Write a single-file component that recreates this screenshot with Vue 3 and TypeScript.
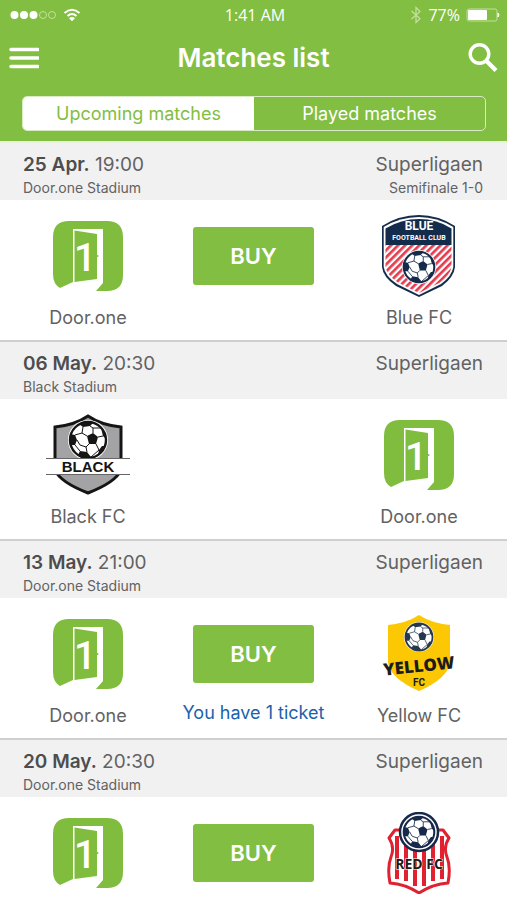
<script setup lang="ts">
import { ref } from 'vue'

type Crest = 'door' | 'blue' | 'black' | 'yellow' | 'red'

interface Team {
  name: string
  crest: Crest
}

interface Match {
  id: number
  date: string
  time: string
  stadium: string
  league: string
  stage?: string
  home: Team
  away: Team
  onSale: boolean
  note?: string
}

const door: Team = { name: 'Door.one', crest: 'door' }

const tab = ref<'upcoming' | 'played'>('upcoming')

const matches: Match[] = [
  { id: 1, date: '25 Apr.', time: '19:00', stadium: 'Door.one Stadium', league: 'Superligaen', stage: 'Semifinale 1-0', home: door, away: { name: 'Blue FC', crest: 'blue' }, onSale: true },
  { id: 2, date: '06 May.', time: '20:30', stadium: 'Black Stadium', league: 'Superligaen', home: { name: 'Black FC', crest: 'black' }, away: door, onSale: false },
  { id: 3, date: '13 May.', time: '21:00', stadium: 'Door.one Stadium', league: 'Superligaen', home: door, away: { name: 'Yellow FC', crest: 'yellow' }, onSale: true, note: 'You have 1 ticket' },
  { id: 4, date: '20 May.', time: '20:30', stadium: 'Door.one Stadium', league: 'Superligaen', home: door, away: { name: 'Red FC', crest: 'red' }, onSale: true },
]
</script>

<template>
  <div class="app">
    <svg class="defs" aria-hidden="true">
      <symbol id="ball" viewBox="-20 -20 40 40">
        <circle r="18" fill="#fff" stroke="currentColor" stroke-width="2.4" />
        <path fill="currentColor" d="M-1-4 5-7 10-3 8 4 1 4Z" />
        <path fill="currentColor" d="M-9-16Q-2-19 5-17L2-14-5-13ZM13-12Q18-7 18-1L15-4ZM17 6Q15 12 10 15L11 10 14 6ZM-8 11-1 12 3 17Q-5 19-10 15ZM-18-6-13-5-11 0-13 5-17 5Q-19 0-18-6Z" />
        <path fill="none" stroke="currentColor" stroke-width="1" d="M-1-4-6-7-5-13M5-7 5-12 2-14M5-12 13-12M10-3 15-4M8 4 11 10M1 4-2 7-1 12M-2 7-8 5-11 0M-13-5-6-7M-13 5-8 11M3 17 11 10" />
      </symbol>
    </svg>

    <header class="top">
      <div class="status">
        <div class="status-left">
          <svg width="47" height="10" viewBox="0 0 47 10" aria-hidden="true">
            <g fill="#fff"><circle cx="4.500" cy="5" r="4" /><circle cx="14" cy="5" r="4" /><circle cx="23.500" cy="5" r="4" /></g>
            <g fill="none" stroke="#c4e09f" stroke-width="1"><circle cx="33" cy="5" r="3.500" /><circle cx="42" cy="5" r="3.500" /></g>
          </svg>
          <svg width="18" height="14" viewBox="0 0 18 14" aria-hidden="true">
            <g fill="none" stroke="#fff" stroke-width="2"><path d="M1.500 5Q9-1.500 16.500 5" /><path d="M4.500 8Q9 4 13.500 8" /></g>
            <path fill="#fff" d="M6 10.300Q9 7.800 12 10.300L9 13.300Z" />
          </svg>
        </div>
        <span>1:41 AM</span>
        <div class="status-right">
          <svg width="12" height="18" viewBox="0 0 12 18" aria-hidden="true">
            <path d="M1.500 5 10 12.500 6 16.500V1.500L10 5.500 1.500 13" fill="none" stroke="#c4e09f" stroke-width="1.200" />
          </svg>
          <span>77%</span>
          <svg width="34" height="14" viewBox="0 0 34 14" aria-hidden="true">
            <rect x="1" y="1" width="30" height="12" rx="2" fill="none" stroke="#c4e09f" />
            <rect x="2" y="2" width="19" height="10" rx="1" fill="#fff" />
            <path d="M32 5Q34 7 32 9Z" fill="#fff" stroke="#fff" />
          </svg>
        </div>
      </div>

      <div class="bar">
        <button class="icon" type="button" aria-label="Menu">
          <svg width="30" height="22" viewBox="0 0 30 22"><path d="M2 2.500H29M2 11H29M2 19.500H29" stroke="#fff" stroke-width="3.500" stroke-linecap="round" /></svg>
        </button>
        <h1>Matches list</h1>
        <button class="icon" type="button" aria-label="Search">
          <svg width="30" height="30" viewBox="0 0 30 30"><g fill="none" stroke="#fff"><circle cx="11.500" cy="11" r="9.300" stroke-width="3.400" /><path d="M18 17.500 28 27.500" stroke-width="4.200" /></g></svg>
        </button>
      </div>

      <div class="tabs" role="tablist">
        <button type="button" role="tab" :aria-selected="tab === 'upcoming'" :class="{ active: tab === 'upcoming' }" @click="tab = 'upcoming'">Upcoming matches</button>
        <button type="button" role="tab" :aria-selected="tab === 'played'" :class="{ active: tab === 'played' }" @click="tab = 'played'">Played matches</button>
      </div>
    </header>

    <main>
      <article v-for="m in matches" :key="m.id" class="match">
        <div class="head">
          <div class="line">
            <span><strong>{{ m.date }}</strong> {{ m.time }}</span>
            <span>{{ m.league }}</span>
          </div>
          <div class="line small">
            <span>{{ m.stadium }}</span>
            <span>{{ m.stage }}</span>
          </div>
        </div>

        <div class="body">
          <div v-for="(team, side) in { home: m.home, away: m.away }" :key="side" class="team" :class="side">
            <svg v-if="team.crest === 'door'" class="crest" viewBox="0 0 84 82" aria-hidden="true">
              <path fill="#80bd3f" d="M23 6H61Q77 6 77 22V60Q77 76 61 76H50L57 68V14H27V67L14 73Q7 69 7 59V22Q7 6 23 6Z" />
              <path fill="#80bd3f" d="M28.500 15.500 51 19V64L28.500 67Z" />
              <circle cx="51.500" cy="41" r="1" fill="#80bd3f" />
              <text x="39" y="56" class="door-number">1</text>
            </svg>

            <svg v-else-if="team.crest === 'blue'" class="crest" viewBox="0 0 84 82" aria-hidden="true">
              <defs>
                <pattern id="diagonals" width="5" height="5" patternUnits="userSpaceOnUse" patternTransform="rotate(45)">
                  <rect width="5" height="5" fill="#fff" /><rect width="2.700" height="5" fill="#e43c4e" />
                </pattern>
              </defs>
              <path fill="#142c4c" d="M42 0Q61 0 78 11V52Q77 62 65 71L42 82 19 71Q6 62 5 52V11Q22 0 42 0Z" />
              <path fill="#fff" d="M42 2Q60 2 76.300 12V52Q75 61 64 69L42 80 20 69Q8 61 6.700 52V12Q23 2 42 2Z" />
              <path fill="url(#diagonals)" d="M8.500 30H74.500V52Q73 60 63 67.500L42 78 21 67.500Q10 60 8.500 52Z" />
              <path fill="#142c4c" d="M8.500 30V13.500Q24 4 42 4T74.500 13.500V30Z" />
              <text x="42" y="15" class="blue-title">BLUE</text>
              <text x="42" y="25" class="blue-sub">FOOTBALL CLUB</text>
              <circle cx="42" cy="52" r="17" fill="#fff" />
              <use href="#ball" x="25" y="35" width="34" height="34" color="#142c4c" />
            </svg>

            <svg v-else-if="team.crest === 'black'" class="crest" viewBox="0 0 84 82" aria-hidden="true">
              <path fill="#a3a3a5" stroke="#151515" stroke-width="3" d="M42 2Q55 11 75 13V56Q70 68 42 79 14 68 9 56V13Q29 11 42 2Z" />
              <circle cx="42" cy="26" r="20" fill="#fff" />
              <use href="#ball" x="22" y="6" width="40" height="40" color="#151515" />
              <rect y="44" width="84" height="17" fill="#fff" />
              <path d="M0 44.500H84M0 60.500H84" stroke="#666" />
              <text x="42" y="58" class="black-title">BLACK</text>
            </svg>

            <svg v-else-if="team.crest === 'yellow'" class="crest" viewBox="0 0 84 82" aria-hidden="true">
              <path fill="#fcc804" d="M42 2Q54 10 73 12V50Q70 66 42 78 14 66 11 50V12Q30 10 42 2Z" />
              <circle cx="42" cy="24" r="15" fill="#fff" />
              <use href="#ball" x="27" y="9" width="30" height="30" color="#26384d" />
              <text x="42" y="59" class="yellow-title" transform="rotate(-6 42 54)">YELLOW</text>
              <text x="42" y="73" class="yellow-sub">FC</text>
            </svg>

            <svg v-else class="crest" viewBox="0 0 84 82" aria-hidden="true">
              <path fill="#fff" stroke="#e12030" stroke-width="3" stroke-linejoin="round" d="M18 18H66L72 26Q66 35 70 45T71 71Q56 72 42 81 28 72 13 71 10 55 14 45T12 26Z" />
              <path fill="none" stroke="#e12030" stroke-width="4" d="M20 24V67M29 24V69M38 26V74M47 26V74M56 24V69M65 24V67" />
              <circle cx="42" cy="20" r="19" fill="#fff" stroke="#17294a" stroke-width="2.500" />
              <use href="#ball" x="25" y="3" width="34" height="34" color="#17294a" />
              <text x="42" y="57" class="red-title">RED FC</text>
            </svg>
            <span class="name">{{ team.name }}</span>
          </div>

          <div class="deal">
            <button v-if="m.onSale" class="buy" type="button">BUY</button>
            <a v-if="m.note" class="note" href="#">{{ m.note }}</a>
          </div>
        </div>
      </article>
    </main>
  </div>
</template>

<style>
html {
  scrollbar-width: none;
}

body {
  margin: 0;
  background: #fff;
}
</style>

<style scoped>
.app {
  font-family: Inter, "Liberation Sans", sans-serif;
  color: #626262;
}

.defs {
  position: absolute;
  width: 0;
  height: 0;
}

button {
  margin: 0;
  padding: 0;
  border: 0;
  font: inherit;
  cursor: pointer;
}

svg {
  display: block;
}

.top {
  background: #82be41;
  color: #fff;
  padding-bottom: 10px;
}

.status {
  display: grid;
  grid-template-columns: 1fr auto 1fr;
  align-items: center;
  height: 30px;
  padding: 0 7px 0 10px;
  font-family: "Open Sans", sans-serif;
  font-size: 16px;
}

.status-left,
.status-right {
  display: flex;
  align-items: center;
  gap: 6px;
}

.status-right {
  justify-content: flex-end;
}

.bar {
  display: flex;
  align-items: center;
  justify-content: space-between;
  height: 56px;
  padding: 0 9px;
}

.icon {
  background: none;
}

h1 {
  margin: 0;
  font-size: 26px;
  font-weight: 600;
  line-height: 32px;
}

.tabs {
  display: grid;
  grid-template-columns: 1fr 1fr;
  height: 35px;
  margin: 10px 21px 0 22px;
  box-sizing: border-box;
  border: 1px solid #d8ebc2;
  border-radius: 5px;
  overflow: hidden;
}

.tabs button {
  background: transparent;
  color: #fff;
  font-size: 18px;
}

.tabs .active {
  background: #fff;
  color: #82be41;
}

.match {
  border-top: 2px solid #cfcfcf;
}

.match:first-child {
  border-top-color: #e8f0e0;
}

.head {
  display: grid;
  padding: 9px 24px 2px 23px;
  background: #f1f1f1;
}

.line {
  display: flex;
  justify-content: space-between;
  font-size: 19px;
  line-height: 26px;
}

.line strong {
  font-weight: 600;
  color: #4d4d4d;
}

.line.small {
  font-size: 14px;
  line-height: 20px;
}

.body {
  display: grid;
  grid-template-columns: 98px 1fr 98px;
  padding: 15px 39px 10px;
}

.team {
  grid-row: 1;
  display: flex;
  flex-direction: column;
  align-items: center;
  gap: 9px;
}

.home {
  grid-column: 1;
}

.away {
  grid-column: 3;
}

.crest {
  width: 84px;
  height: 82px;
}

.name {
  font-size: 18px;
  line-height: 24px;
  white-space: nowrap;
}

.deal {
  grid-column: 2;
  grid-row: 1;
  display: flex;
  flex-direction: column;
  align-items: center;
  gap: 18px;
  padding-top: 12px;
}

.buy {
  width: 121px;
  height: 58px;
  border-radius: 3px;
  background: #82be41;
  color: #fff;
  font-size: 22px;
  font-weight: 600;
}

.note {
  color: #1c62ab;
  font-size: 18px;
  line-height: 24px;
  text-decoration: none;
  white-space: nowrap;
}

text {
  text-anchor: middle;
  font-family: Roboto, sans-serif;
  font-weight: 700;
}

.door-number {
  fill: #fff;
  font-family: "Liberation Sans Narrow", Roboto, sans-serif;
  font-size: 39px;
  font-weight: 500;
}

.blue-title {
  fill: #fff;
  font-family: "Liberation Sans Narrow", Roboto, sans-serif;
  font-size: 12px;
}

.blue-sub {
  fill: #fff;
  font-family: "Liberation Sans Narrow", Roboto, sans-serif;
  font-size: 7px;
}

.black-title {
  fill: #151515;
  font-family: "Liberation Sans", sans-serif;
  font-size: 15px;
}

.yellow-title {
  fill: #1c1c1c;
  font-family: "Open Sans", sans-serif;
  font-size: 17px;
  font-weight: 800;
}

.yellow-sub {
  fill: #1c1c1c;
  font-size: 10px;
}

.red-title {
  fill: #1c1c1c;
  stroke: #fff;
  stroke-width: 1;
  paint-order: stroke;
  font-family: "Open Sans", sans-serif;
  font-size: 14px;
}
</style>
